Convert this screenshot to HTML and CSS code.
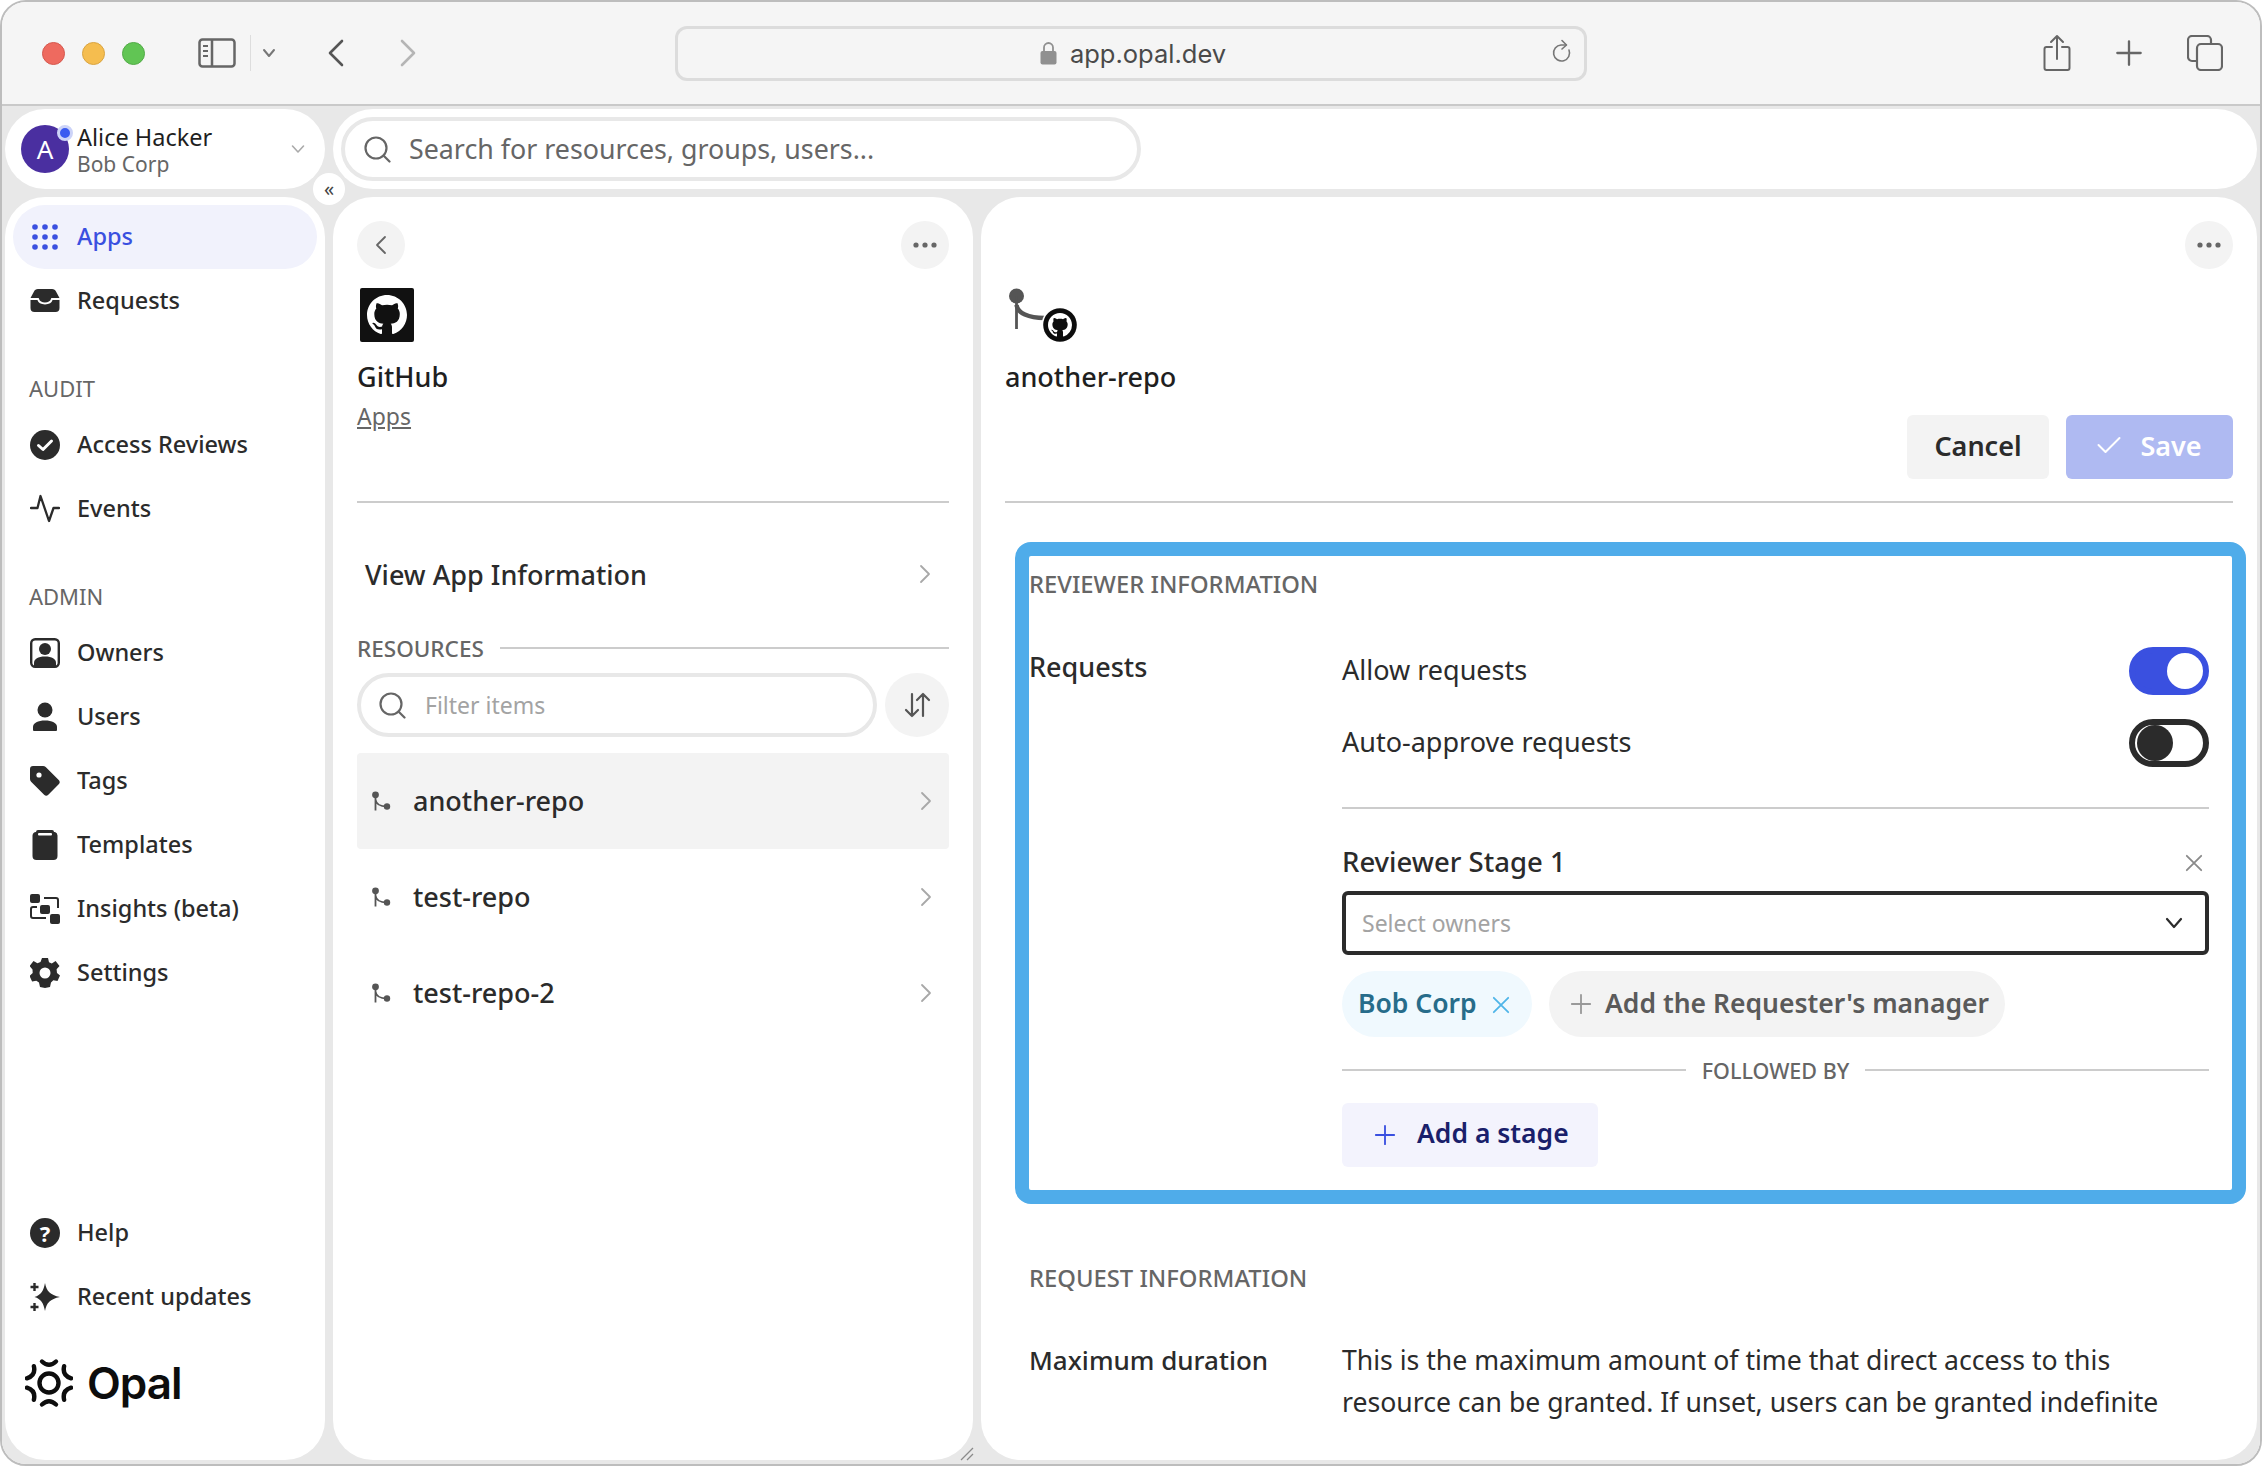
FILE: index.html
```html
<!DOCTYPE html>
<html lang="en">
<head>
<meta charset="UTF-8">
<meta name="viewport" content="width=device-width, initial-scale=1.0">
<title>Opal</title>
<link rel="stylesheet" href="styles.css">
</head>
<body>
<svg class="defs" width="0" height="0">
    <symbol id="gh" viewBox="0 0 16 16">
        <path d="M8 0C3.58 0 0 3.58 0 8c0 3.54 2.29 6.53 5.47 7.59.4.07.55-.17.55-.38 0-.19-.01-.82-.01-1.49-2.01.37-2.53-.49-2.69-.94-.09-.23-.48-.94-.82-1.13-.28-.15-.68-.52-.01-.53.63-.01 1.08.58 1.23.82.72 1.21 1.87.87 2.33.66.07-.52.28-.87.51-1.07-1.78-.2-3.64-.89-3.64-3.95 0-.87.31-1.59.82-2.15-.08-.2-.36-1.02.08-2.12 0 0 .67-.21 2.2.82.64-.18 1.32-.27 2-.27.68 0 1.36.09 2 .27 1.53-1.04 2.2-.82 2.2-.82.44 1.1.16 1.92.08 2.12.51.56.82 1.27.82 2.15 0 3.07-1.87 3.75-3.65 3.95.29.25.54.73.54 1.48 0 1.07-.01 1.93-.01 2.2 0 .21.15.46.55.38A8.013 8.013 0 0016 8c0-4.42-3.58-8-8-8z"/>
    </symbol>
    <symbol id="branch" viewBox="0 0 20 20">
        <circle cx="4.5" cy="3.8" r="3.4"/>
        <circle cx="16" cy="15.5" r="3.2"/>
        <path d="M4.5 4v15.5M4.5 8.5c.5 4 4.500 7 11.500 7" fill="none" stroke="currentColor" stroke-width="1.8"/>
    </symbol>
    <symbol id="chev-right" viewBox="0 0 12 20">
        <path d="M2 2l8 8-8 8" fill="none" stroke="currentColor" stroke-width="1.8" stroke-linecap="round" stroke-linejoin="round"/>
    </symbol>
    <symbol id="search" viewBox="0 0 28 28">
        <circle cx="13" cy="13" r="10.500" fill="none" stroke="currentColor" stroke-width="2.200"/>
        <path d="M20.500 20.500l6 6" fill="none" stroke="currentColor" stroke-width="2.200" stroke-linecap="round"/>
    </symbol>
    <symbol id="dots" viewBox="0 0 24 6">
        <circle cx="3" cy="3" r="2.600"/><circle cx="12" cy="3" r="2.600"/><circle cx="21" cy="3" r="2.600"/>
    </symbol>
    <symbol id="plus" viewBox="0 0 24 24">
        <path d="M12 2v20M2 12h20" fill="none" stroke="currentColor" stroke-width="2" stroke-linecap="round"/>
    </symbol>
    <symbol id="cross" viewBox="0 0 20 20">
        <path d="M2 2l16 16M18 2L2 18" fill="none" stroke="currentColor" stroke-width="2" stroke-linecap="round"/>
    </symbol>
</svg>

<div class="window">
    <header class="toolbar">
        <div class="lights">
            <span class="light red"></span>
            <span class="light yellow"></span>
            <span class="light green"></span>
        </div>
        <svg class="tb-sidebar" width="38" height="30" viewBox="0 0 38 30" fill="none" stroke="#666" stroke-width="2.500">
            <rect x="1.500" y="1.500" width="35" height="27" rx="3"/>
            <path d="M14 1.500v27"/>
            <path d="M5 8h5M5 13h5M5 18h5" stroke-width="2"/>
        </svg>
        <span class="tb-sep"></span>
        <svg class="tb-down" width="14" height="10" viewBox="0 0 14 10" fill="none" stroke="#777" stroke-width="2" stroke-linecap="round" stroke-linejoin="round"><path d="M2 2l5 6 5-6"/></svg>
        <svg class="tb-back" width="17" height="28" viewBox="0 0 17 28" fill="none" stroke="#555" stroke-width="2.600" stroke-linecap="round" stroke-linejoin="round"><path d="M15 2L3 14l12 12"/></svg>
        <svg class="tb-forward" width="17" height="28" viewBox="0 0 17 28" fill="none" stroke="#b5b5b5" stroke-width="2.600" stroke-linecap="round" stroke-linejoin="round"><path d="M2 2l12 12L2 26"/></svg>
        <div class="urlbar">
            <div class="url-main">
                <svg width="17" height="24" viewBox="0 0 17 24" fill="none">
                    <path d="M4 10V6.500a4.500 4.500 0 0 1 9 0V10" stroke="#909090" stroke-width="1.800"/>
                    <rect x=".5" y="10" width="16" height="13.500" rx="2" fill="#909090"/>
                </svg>
                <span class="url-text">app.opal.dev</span>
            </div>
            <svg class="url-reload" width="22" height="26" viewBox="0 0 22 26" fill="none" stroke="#777" stroke-width="1.600" stroke-linecap="round" stroke-linejoin="round">
                <path d="M17 11a8 8 0 1 1-8-5h5"/><path d="M10 1.500l4.500 4.500L10 10"/>
            </svg>
        </div>
        <div class="tb-right">
            <svg width="28" height="38" viewBox="0 0 28 38" fill="none" stroke="#666" stroke-width="2" stroke-linecap="round" stroke-linejoin="round">
                <path d="M9 13H3.500a2 2 0 0 0-2 2v19a2 2 0 0 0 2 2h21a2 2 0 0 0 2-2V15a2 2 0 0 0-2-2H19"/>
                <path d="M14 25V2M8 8l6-6 6 6"/>
            </svg>
            <svg class="ico-tb-plus" width="28" height="28"><use href="#plus"/></svg>
            <svg width="36" height="36" viewBox="0 0 36 36" fill="none" stroke="#666" stroke-width="2.200">
                <rect x="10" y="9" width="25" height="26" rx="4"/>
                <path d="M10 26H5a4 4 0 0 1-4-4V5a4 4 0 0 1 4-4h15a4 4 0 0 1 4 4v4"/>
            </svg>
        </div>
    </header>

    <div class="app">
        <div class="user-card">
            <div class="avatar">A<span class="avatar-dot"></span></div>
            <div class="user-info">
                <div class="user-name">Alice Hacker</div>
                <div class="user-org">Bob Corp</div>
            </div>
            <svg class="user-chev" width="14" height="10" viewBox="0 0 14 10" fill="none" stroke="#aaa" stroke-width="1.600" stroke-linecap="round" stroke-linejoin="round"><path d="M1.500 2L7 8l5.500-6"/></svg>
        </div>

        <div class="search-card">
            <div class="search-box">
                <svg class="search-ico" width="28" height="28"><use href="#search"/></svg>
                <span class="search-text">Search for resources, groups, users...</span>
            </div>
        </div>

        <nav class="sidebar">
            <a class="nav-item active">
                <svg class="nav-ico" width="30" height="30" viewBox="0 0 30 30" fill="#3a50e0">
                    <circle cx="5" cy="5" r="2.800"/><circle cx="15" cy="5" r="2.800"/><circle cx="25" cy="5" r="2.800"/>
                    <circle cx="5" cy="15" r="2.800"/><circle cx="15" cy="15" r="2.800"/><circle cx="25" cy="15" r="2.800"/>
                    <circle cx="5" cy="25" r="2.800"/><circle cx="15" cy="25" r="2.800"/><circle cx="25" cy="25" r="2.800"/>
                </svg>
                Apps
            </a>
            <a class="nav-item">
                <svg class="nav-ico" width="30" height="30" viewBox="0 0 30 30" fill="#2b2b2b">
                    <path d="M8 3h14c2 0 3.400 1 4 2.600L29.500 12v10a4 4 0 0 1-4 4h-21a4 4 0 0 1-4-4V12L4 5.600C4.600 4 6 3 8 3z"/>
                    <path d="M0 13h8c1 3 3.500 4.500 7 4.500s6-1.500 7-4.500h8" fill="none" stroke="#fff" stroke-width="2"/>
                </svg>
                Requests
            </a>

            <div class="nav-title">AUDIT</div>
            <a class="nav-item">
                <svg class="nav-ico" width="30" height="30" viewBox="0 0 30 30">
                    <circle cx="15" cy="15" r="15" fill="#2b2b2b"/>
                    <path d="M8.500 15.500l4.500 4 8.500-8.500" fill="none" stroke="#fff" stroke-width="3" stroke-linecap="round" stroke-linejoin="round"/>
                </svg>
                Access Reviews
            </a>
            <a class="nav-item">
                <svg class="nav-ico" width="30" height="30" viewBox="0 0 30 30" fill="none" stroke="#2b2b2b" stroke-width="2.300" stroke-linecap="round" stroke-linejoin="round">
                    <path d="M1 14h6.500L10.500 2l8.500 25 4.500-13H29"/>
                </svg>
                Events
            </a>

            <div class="nav-title">ADMIN</div>
            <a class="nav-item">
                <svg class="nav-ico" width="30" height="30" viewBox="0 0 30 30">
                    <rect x="1.200" y="1.200" width="27.600" height="27.600" rx="4" fill="none" stroke="#2b2b2b" stroke-width="2.400"/>
                    <circle cx="15" cy="11" r="6" fill="#2b2b2b"/>
                    <path d="M4 28v-3c0-4 4-6.500 11-6.500S26 21 26 25v3z" fill="#2b2b2b"/>
                </svg>
                Owners
            </a>
            <a class="nav-item">
                <svg class="nav-ico" width="30" height="30" viewBox="0 0 30 30" fill="#2b2b2b">
                    <circle cx="15" cy="8" r="7.500"/>
                    <path d="M3 28v-3c0-4 5-6.500 12-6.500S27 21 27 25v3a1 1 0 0 1-1 1H4a1 1 0 0 1-1-1z"/>
                </svg>
                Users
            </a>
            <a class="nav-item">
                <svg class="nav-ico" width="30" height="30" viewBox="0 0 30 30">
                    <path d="M3 0h10c1 0 2 .4 2.700 1.100l13 13a3 3 0 0 1 0 4.200l-10.400 10.400a3 3 0 0 1-4.200 0l-13-13C.400 15 0 14 0 13V3a3 3 0 0 1 3-3z" fill="#2b2b2b"/>
                    <circle cx="9" cy="9" r="2.600" fill="#fff"/>
                </svg>
                Tags
            </a>
            <a class="nav-item">
                <svg class="nav-ico" width="30" height="30" viewBox="0 0 30 30">
                    <path d="M8 0h14a2 2 0 0 1 2 2h1a4 4 0 0 1 2.500 3.500V26a4 4 0 0 1-4 4H6.500a4 4 0 0 1-4-4V5.500A4 4 0 0 1 6 2a2 2 0 0 1 2-2z" fill="#2b2b2b"/>
                    <rect x="8" y="3" width="14" height="2.500" rx="1" fill="#fff"/>
                </svg>
                Templates
            </a>
            <a class="nav-item">
                <svg class="nav-ico" width="30" height="30" viewBox="0 0 30 30" fill="#2b2b2b">
                    <rect x="0" y="0" width="10" height="9" rx="2"/>
                    <rect x="10" y="11" width="10" height="9" rx="2"/>
                    <rect x="20" y="20" width="10" height="10" rx="2"/>
                    <path d="M14 4h12a2 2 0 0 1 2 2v8M7 13H3a2 2 0 0 0-2 2v7a2 2 0 0 0 2 2h13" fill="none" stroke="#2b2b2b" stroke-width="2"/>
                </svg>
                Insights (beta)
            </a>
            <a class="nav-item">
                <svg class="nav-ico" width="30" height="30" viewBox="0 0 30 30" fill="#2b2b2b">
                    <path fill-rule="evenodd" d="M12 0h6l1 4.200 2.800 1.200L25.600 3 29.500 8l-2.900 3.300.4 3.700 3 2.500-2.500 5.500-4.200-.7-2.300 2.300L20 29l-5 1-5-1-1-4.400-2.700-1.900-4.200.8L-.5 18l3.200-3-.2-3.500L-.5 8 3.500 3l3.900 2.300L10.500 4z M15 9.500a5.500 5.500 0 1 0 0 11 5.500 5.500 0 0 0 0-11z"/>
                </svg>
                Settings
            </a>

            <div class="nav-bottom">
                <a class="nav-item">
                    <span class="nav-ico help-ico">?</span>
                    Help
                </a>
                <a class="nav-item">
                    <svg class="nav-ico" width="30" height="30" viewBox="0 0 30 30" fill="#2b2b2b">
                        <path d="M15 1c1.500 8 5 12 15 14-10 2-13.500 6-15 14-1.500-8-4-12-10.500-14C11 13 13.500 9 15 1z"/>
                        <path d="M4.500 1v8M.5 5h8M4.500 21v8M.5 25h8" stroke="#2b2b2b" stroke-width="2.400" fill="none"/>
                    </svg>
                    Recent updates
                </a>
                <div class="brand">
                    <svg width="48" height="50" viewBox="0 0 48 50" fill="none" stroke="#0d0d0d" stroke-width="4.400" stroke-linecap="round">
                        <circle cx="24" cy="25" r="9.500"/>
                        <g>
                            <path d="M17 3.500q7 6.500 14 0"/>
                            <path d="M17 3.500q7 6.500 14 0" transform="rotate(60 24 25)"/>
                            <path d="M17 3.500q7 6.500 14 0" transform="rotate(120 24 25)"/>
                            <path d="M17 3.500q7 6.500 14 0" transform="rotate(180 24 25)"/>
                            <path d="M17 3.500q7 6.500 14 0" transform="rotate(240 24 25)"/>
                            <path d="M17 3.500q7 6.500 14 0" transform="rotate(300 24 25)"/>
                        </g>
                    </svg>
                    <span class="brand-name">Opal</span>
                </div>
            </div>
        </nav>

        <section class="panel panel-mid">
            <div class="panel-head">
                <div class="head-btns">
                    <button class="round-btn">
                        <svg width="12" height="20"><use href="#chev-right" transform="rotate(180 6 10)"/></svg>
                    </button>
                    <button class="round-btn">
                        <svg class="dots-ico" width="24" height="6"><use href="#dots"/></svg>
                    </button>
                </div>
                <svg class="gh-logo" width="54" height="54" viewBox="0 0 54 54">
                    <rect width="54" height="54" rx="2" fill="#111"/>
                    <use href="#gh" x="7" y="7" width="40" height="40" fill="#fff"/>
                </svg>
                <h2 class="head-title">GitHub</h2>
                <a class="head-link">Apps</a>
            </div>

            <div class="info-row">
                View App Information
                <svg class="row-chev" width="12" height="20"><use href="#chev-right"/></svg>
            </div>

            <div class="res-title"><span>RESOURCES</span><i></i></div>

            <div class="filter-row">
                <div class="filter-box">
                    <svg class="filter-ico" width="28" height="28"><use href="#search"/></svg>
                    <span class="filter-text">Filter items</span>
                </div>
                <button class="sort-btn">
                    <svg width="28" height="28" viewBox="0 0 28 28" fill="none" stroke="#555" stroke-width="2.200" stroke-linecap="round" stroke-linejoin="round">
                        <path d="M9 3v22M3 19l6 6 6-6M20 25V3M14 9l6-6 6 6"/>
                    </svg>
                </button>
            </div>

            <div class="res-list">
                <div class="res-item selected">
                    <svg class="res-ico" width="20" height="20"><use href="#branch"/></svg>
                    <span class="res-name">another-repo</span>
                    <svg class="row-chev" width="12" height="20"><use href="#chev-right"/></svg>
                </div>
                <div class="res-item">
                    <svg class="res-ico" width="20" height="20"><use href="#branch"/></svg>
                    <span class="res-name">test-repo</span>
                    <svg class="row-chev" width="12" height="20"><use href="#chev-right"/></svg>
                </div>
                <div class="res-item">
                    <svg class="res-ico" width="20" height="20"><use href="#branch"/></svg>
                    <span class="res-name">test-repo-2</span>
                    <svg class="row-chev" width="12" height="20"><use href="#chev-right"/></svg>
                </div>
            </div>
        </section>

        <section class="panel panel-detail">
            <div class="panel-head">
                <div class="head-btns end">
                    <button class="round-btn">
                        <svg class="dots-ico" width="24" height="6"><use href="#dots"/></svg>
                    </button>
                </div>
                <svg class="res-logo" width="72" height="54" viewBox="0 0 72 54">
                    <circle cx="8.500" cy="8" r="7.500" fill="#555"/>
                    <path d="M8.500 8v33" fill="none" stroke="#555" stroke-width="2.800"/>
                    <path d="M8.500 17c1 8 12 13 28 13" fill="none" stroke="#555" stroke-width="4.500"/>
                    <circle cx="52" cy="37" r="18.500" fill="#fff"/>
                    <circle cx="52" cy="37" r="16.800" fill="#0d0d0d"/>
                    <use href="#gh" x="40" y="25" width="24" height="24" fill="#fff"/>
                </svg>
                <h2 class="head-title">another-repo</h2>
                <div class="head-actions">
                    <button class="btn btn-cancel">Cancel</button>
                    <button class="btn btn-save">
                        <svg width="24" height="18" viewBox="0 0 24 18" fill="none" stroke="#fff" stroke-width="2" stroke-linecap="round" stroke-linejoin="round"><path d="M1.500 9l7 7L22.500 2"/></svg>
                        Save
                    </button>
                </div>
            </div>

            <div class="reviewer-box">
                <h3 class="sec-title">REVIEWER INFORMATION</h3>
                <div class="form-grid">
                    <div class="form-label">Requests</div>
                    <div class="form-body">
                        <div class="switch-row">
                            <span>Allow requests</span>
                            <span class="switch on"><i></i></span>
                        </div>
                        <div class="switch-row">
                            <span>Auto-approve requests</span>
                            <span class="switch"><i></i></span>
                        </div>
                        <div class="form-line"></div>
                        <div class="stage-head">
                            <span>Reviewer Stage 1</span>
                            <svg class="stage-x" width="18" height="18"><use href="#cross"/></svg>
                        </div>
                        <div class="select">
                            <span>Select owners</span>
                            <svg width="18" height="12" viewBox="0 0 18 12" fill="none" stroke="#2b2b2b" stroke-width="2.200" stroke-linecap="round" stroke-linejoin="round"><path d="M2 2l7 8 7-8"/></svg>
                        </div>
                        <div class="chips">
                            <span class="chip chip-org">Bob Corp <svg width="18" height="18"><use href="#cross"/></svg></span>
                            <span class="chip chip-add"><svg width="22" height="22"><use href="#plus"/></svg> Add the Requester's manager</span>
                        </div>
                        <div class="followed"><i></i><span>FOLLOWED BY</span><i></i></div>
                        <button class="btn btn-stage">
                            <svg width="22" height="22"><use href="#plus"/></svg>
                            Add a stage
                        </button>
                    </div>
                </div>
            </div>

            <div class="request-info">
                <h3 class="sec-title">REQUEST INFORMATION</h3>
                <div class="form-grid duration">
                    <div class="form-label">Maximum duration</div>
                    <div class="form-desc">This is the maximum amount of time that direct access to this<br>resource can be granted. If unset, users can be granted indefinite</div>
                </div>
            </div>
        </section>

        <button class="collapse-btn">«</button>
        <svg class="resize-grip" width="14" height="14" viewBox="0 0 14 14" stroke="#8a8a8a" stroke-width="1.300"><path d="M1 13L13 1M7 13l6-6"/></svg>
    </div>
</div>
</body>
</html>
```

FILE: styles.css
```css
* {
    box-sizing: border-box;
}
html, body {
    margin: 0;
    padding: 0;
    background-color: #fff;
}
body {
    font-family: "Noto Sans", Arial, sans-serif;
    color: #2b2b2b;
}
h2, h3 {
    margin: 0;
}
button {
    font-family: inherit;
    border: none;
    padding: 0;
    cursor: pointer;
}
.defs {
    position: absolute;
}
.window {
    width: 2262px;
    height: 1466px;
    display: flex;
    flex-direction: column;
    border: 2px solid #bdbdbd;
    border-radius: 26px;
    overflow: hidden;
}

/* browser bar */
.toolbar {
    flex: none;
    height: 104px;
    background-color: #f5f5f5;
    border-bottom: 2px solid #c9c9c9;
    display: flex;
    align-items: center;
    padding-left: 40px;
    position: relative;
}
.lights {
    display: flex;
    gap: 17px;
}
.light {
    width: 23px;
    height: 23px;
    border-radius: 50%;
}
.red { background-color: #ee6a5f; border: 1px solid #d5584e; }
.yellow { background-color: #f5bd4f; border: 1px solid #d9a441; }
.green { background-color: #61c554; border: 1px solid #52ab47; }
.tb-sidebar {
    margin-left: 53px;
}
.tb-sep {
    width: 1px;
    height: 36px;
    background-color: #ddd;
    margin-left: 14px;
}
.tb-down {
    margin-left: 11px;
}
.tb-back {
    margin-left: 51px;
}
.tb-forward {
    margin-left: 56px;
}
.urlbar {
    position: relative;
    width: 912px;
    height: 55px;
    margin-left: 258px;
    border: 3px solid #dcdcdc;
    border-radius: 12px;
    display: flex;
    align-items: center;
    justify-content: center;
}
.url-main {
    display: flex;
    align-items: center;
    gap: 13px;
    margin-left: 4px;
}
.url-text {
    font-family: "Inter", sans-serif;
    font-size: 25.5px;
    color: #4a4a4a;
}
.url-reload {
    position: absolute;
    right: 10px;
    top: 10px;
}
.tb-right {
    margin-left: auto;
    padding-right: 37px;
    display: flex;
    align-items: center;
    gap: 44px;
    color: #666;
}

/* app */
.app {
    flex: 1;
    position: relative;
    background-color: #e8e8e8;
    display: grid;
    grid-template-columns: 320px 640px 1fr;
    grid-template-rows: 80px 1fr;
    gap: 8px;
    padding: 3px 3px 4px 3px;
    min-height: 0;
}
.user-card {
    background-color: #fff;
    border-radius: 40px;
    display: flex;
    align-items: center;
    padding: 0 20px 0 16px;
}
.avatar {
    position: relative;
    width: 48px;
    height: 48px;
    border-radius: 50%;
    background-color: #4a2fa0;
    color: #fff;
    font-size: 26px;
    line-height: 48px;
    text-align: center;
    flex: none;
}
.avatar-dot {
    position: absolute;
    top: 0;
    right: -4px;
    width: 16px;
    height: 16px;
    border-radius: 50%;
    background-color: #3a5af0;
    border: 3px solid #ccd3f8;
}
.user-info {
    margin-left: 8px;
    flex: 1;
}
.user-name {
    font-size: 23.5px;
    line-height: 30px;
    color: #1f1f1f;
}
.user-org {
    font-size: 21px;
    line-height: 26px;
    margin-top: -1px;
    color: #666;
}
.search-card {
    grid-column: 2 / 4;
    background-color: #fff;
    border-radius: 40px;
    padding: 8px;
}
.search-box {
    width: 800px;
    height: 64px;
    border: 4px solid #e8e8e8;
    border-radius: 32px;
    display: flex;
    align-items: center;
    padding-left: 18px;
    color: #666;
}
.search-text {
    font-size: 26.8px;
    margin-left: 18px;
    padding-bottom: 2px;
    color: #666;
}

/* sidebar */
.sidebar {
    background-color: #fff;
    border-radius: 40px;
    padding: 8px;
    display: flex;
    flex-direction: column;
    min-height: 0;
}
.nav-item {
    height: 64px;
    flex: none;
    display: flex;
    align-items: center;
    gap: 17px;
    padding-left: 17px;
    padding-bottom: 2px;
    border-radius: 32px;
    font-size: 23.5px;
    font-weight: 500;
    color: #2b2b2b;
}
.nav-item.active {
    background-color: #f1f2fc;
    color: #3a50e0;
}
.nav-ico {
    flex: none;
    width: 30px;
    height: 30px;
    margin-top: 2px;
}
.help-ico {
    border-radius: 50%;
    background-color: #2b2b2b;
    color: #fff;
    font-size: 22px;
    font-weight: 700;
    line-height: 30px;
    text-align: center;
}
.nav-title {
    height: 32px;
    margin-top: 40px;
    margin-bottom: 8px;
    padding-left: 16px;
    font-size: 22px;
    line-height: 30px;
    color: #666;
    flex: none;
}
.nav-bottom {
    margin-top: auto;
}
.brand {
    height: 123px;
    display: flex;
    align-items: flex-start;
    gap: 14px;
    padding: 29px 0 0 12px;
}
.brand-name {
    font-family: "Inter", sans-serif;
    font-size: 44px;
    font-weight: 600;
    letter-spacing: -1px;
    line-height: 50px;
    color: #0d0d0d;
}

/* panels */
.panel {
    background-color: #fff;
    border-radius: 40px;
    padding: 24px;
    min-height: 0;
    overflow: hidden;
}
.panel-head {
    height: 282px;
    border-bottom: 2px solid #ccc;
    position: relative;
}
.head-btns {
    display: flex;
    justify-content: space-between;
}
.head-btns.end {
    justify-content: flex-end;
}
.round-btn {
    width: 48px;
    height: 48px;
    border-radius: 50%;
    background-color: #f3f3f3;
    color: #666;
    fill: #666;
    display: flex;
    align-items: center;
    justify-content: center;
}
.gh-logo {
    display: block;
    margin: 19px 0 0 3px;
}
.res-logo {
    display: block;
    margin: 19px 0 0 3px;
}
.head-title {
    margin-top: 18px;
    font-size: 27px;
    line-height: 34px;
    font-weight: 500;
    color: #1f1f1f;
}
.head-link {
    display: block;
    margin-top: 7px;
    font-size: 23px;
    line-height: 30px;
    color: #666;
    text-decoration: underline;
}
.head-actions {
    position: absolute;
    right: 0;
    bottom: 22px;
    display: flex;
    gap: 17px;
}
.btn {
    height: 64px;
    border-radius: 6px;
    font-size: 27px;
    font-weight: 600;
    padding-bottom: 4px;
    display: flex;
    align-items: center;
    justify-content: center;
}
.btn-cancel {
    width: 142px;
    background-color: #f3f3f3;
    color: #2b2b2b;
}
.btn-save {
    width: 167px;
    gap: 19px;
    background-color: #afbaf2;
    color: #fff;
}

/* middle list */
.info-row {
    height: 64px;
    margin-top: 39px;
    padding: 0 18px 0 8px;
    display: flex;
    align-items: center;
    justify-content: space-between;
    font-size: 27px;
    font-weight: 500;
}
.row-chev {
    color: #a8a8a8;
    flex: none;
}
.res-title {
    height: 24px;
    margin-top: 30px;
    display: flex;
    align-items: center;
    gap: 16px;
    font-size: 22.500px;
    font-weight: 500;
    color: #666;
}
.res-title i {
    flex: 1;
    height: 2px;
    background-color: #ccc;
}
.filter-row {
    margin-top: 13px;
    display: flex;
    gap: 8px;
}
.filter-box {
    flex: 1;
    height: 64px;
    border: 4px solid #e8e8e8;
    border-radius: 32px;
    display: flex;
    align-items: center;
    padding-left: 17px;
    color: #666;
}
.filter-text {
    margin-left: 19px;
    font-size: 23px;
    color: #a3a3a3;
}
.sort-btn {
    width: 64px;
    height: 64px;
    border-radius: 50%;
    background-color: #f3f3f3;
    display: flex;
    align-items: center;
    justify-content: center;
}
.res-list {
    margin-top: 16px;
}
.res-item {
    height: 96px;
    border-radius: 4px;
    display: flex;
    align-items: center;
    padding: 0 17px 0 14px;
}
.res-item.selected {
    background-color: #f3f3f3;
}
.res-ico {
    color: #555;
    fill: #555;
    flex: none;
}
.res-name {
    flex: 1;
    margin-left: 22px;
    padding-bottom: 2px;
    font-size: 27px;
    font-weight: 500;
}

/* detail form */
.reviewer-box {
    margin: 39px -13px 0 10px;
    border: 14px solid #4facea;
    border-radius: 16px;
    padding: 14px 23px 23px 0;
}
.sec-title {
    font-size: 23.800px;
    line-height: 28px;
    font-weight: 500;
    color: #666;
}
.form-grid {
    display: grid;
    grid-template-columns: 313px 1fr;
    margin-top: 49px;
}
.form-label {
    font-size: 27px;
    font-weight: 500;
    line-height: 40px;
}
.switch-row {
    height: 48px;
    margin-bottom: 24px;
    display: flex;
    align-items: center;
    justify-content: space-between;
    font-size: 27px;
}
.switch-row > span:first-child {
    padding-bottom: 4px;
}
.switch {
    width: 80px;
    height: 48px;
    border: 6px solid #2b2b2b;
    border-radius: 24px;
    background-color: #fff;
    display: flex;
    align-items: center;
    padding-left: 2px;
}
.switch i {
    width: 36px;
    height: 36px;
    border-radius: 50%;
    background-color: #2b2b2b;
}
.switch.on {
    border-color: #3a50e0;
    background-color: #3a50e0;
    justify-content: flex-end;
    padding: 0;
}
.switch.on i {
    background-color: #fff;
}
.form-line {
    height: 2px;
    background-color: #ccc;
    margin-top: 40px;
}
.stage-head {
    height: 34px;
    margin-top: 36px;
    display: flex;
    align-items: center;
    justify-content: space-between;
    font-size: 27.500px;
    font-weight: 500;
    line-height: 32px;
}
.stage-x {
    color: #8a8a8a;
    margin-right: 6px;
    margin-top: 2px;
}
.select {
    height: 64px;
    margin-top: 12px;
    border: 4px solid #2b2b2b;
    border-radius: 6px;
    display: flex;
    align-items: center;
    justify-content: space-between;
    padding: 0 22px 0 16px;
    font-size: 23px;
    color: #a3a3a3;
}
.chips {
    margin-top: 16px;
    display: flex;
    gap: 17px;
}
.chip {
    height: 66px;
    border-radius: 33px;
    display: flex;
    align-items: center;
    padding-bottom: 2px;
    font-size: 26.500px;
    font-weight: 600;
}
.chip-org {
    width: 190px;
    padding-left: 16px;
    gap: 15px;
    background-color: #f0f9fe;
    color: #276c8a;
}
.chip-org svg {
    color: #4fb5e8;
    margin-top: 3px;
}
.chip-add {
    width: 456px;
    padding-left: 21px;
    gap: 13px;
    background-color: #f3f3f3;
    color: #5a5a5a;
}
.chip-add svg {
    color: #999;
    margin-top: 2px;
}
.followed {
    height: 30px;
    margin-top: 18px;
    display: flex;
    align-items: center;
    gap: 16px;
    font-size: 21.500px;
    font-weight: 500;
    color: #666;
}
.followed i {
    flex: 1;
    height: 2px;
    background-color: #ccc;
}
.btn-stage {
    width: 256px;
    margin-top: 18px;
    padding-left: 32px;
    justify-content: flex-start;
    gap: 21px;
    font-size: 26.500px;
    background-color: #f3f3fd;
    color: #1a1f6b;
}
.btn-stage svg {
    color: #3a50e0;
    margin-top: 3px;
}
.request-info {
    margin: 60px 0 0 24px;
}
.duration {
    margin-top: 47px;
}
.duration .form-label {
    font-size: 26px;
    line-height: 42px;
}
.form-desc {
    font-size: 26.600px;
    line-height: 42px;
    white-space: nowrap;
}

/* things on top of the panels */
.collapse-btn {
    position: absolute;
    left: 311px;
    top: 67px;
    width: 32px;
    height: 32px;
    border-radius: 50%;
    background-color: #fff;
    color: #444;
    font-size: 20px;
    line-height: 28px;
}
.resize-grip {
    position: absolute;
    left: 958px;
    bottom: 3px;
}
```
